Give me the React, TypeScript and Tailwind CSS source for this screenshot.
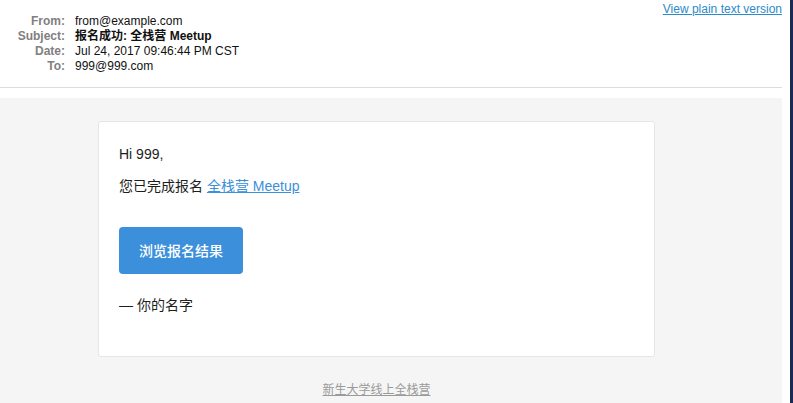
export default function App() {
  const font = { fontFamily: '"Liberation Sans", "Noto Sans CJK SC", sans-serif' };

  const headers = [
    { label: "From:", value: "from@example.com", bold: false },
    { label: "Subject:", value: "报名成功: 全栈营 Meetup", bold: true },
    { label: "Date:", value: "Jul 24, 2017 09:46:44 PM CST", bold: false },
    { label: "To:", value: "999@999.com", bold: false },
  ];

  return (
    <div className="flex h-[403px] w-[793px] overflow-hidden bg-white" style={font}>
      <div className="flex w-[782px] shrink-0 flex-col">
        <header className="flex h-[88px] shrink-0 items-start justify-between border-b border-[#dcdcdc]">
          <div className="grid grid-cols-[65px_1fr] gap-x-[10px] pt-[14px] text-[12px] leading-[15px]">
            {headers.map((h) => (
              <div key={h.label} className="contents">
                <span className="text-right font-bold text-[#808080]">{h.label}</span>
                <span className={h.bold ? "font-bold text-[#111]" : "text-[#111]"}>{h.value}</span>
              </div>
            ))}
          </div>
          <a href="#" className="pt-[2px] text-[12px] leading-[15px] text-[#2b8bc9] underline">
            View plain text version
          </a>
        </header>

        <main className="mt-[10px] flex-1 bg-[#f5f5f5] pt-[23px]">
          <div className="ml-[98px] w-[557px]">
            <div className="rounded-[3px] border border-[#e6e6e6] bg-white px-[20px] pt-[22px] pb-[41px] text-[14px] leading-[20px] text-[#1d1d1d]">
              <p>Hi 999,</p>
              <p className="mt-[12px]">
                您已完成报名{" "}
                <a href="#" className="text-[#3b8fdb] underline">
                  全栈营 Meetup
                </a>
              </p>
              <button
                type="button"
                className="mt-[31px] h-[47px] w-[124px] rounded-[4px] bg-[#3b8fdb] text-[14px] font-medium text-white"
              >
                浏览报名结果
              </button>
              <p className="mt-[21px]">— 你的名字</p>
            </div>
            <div className="mt-[25px] text-center text-[12px] leading-[16px]">
              <a href="#" className="text-[#9a9a9a] underline">
                新生大学线上全栈营
              </a>
            </div>
          </div>
        </main>
      </div>
      <div className="w-[8px] shrink-0 bg-white" />
      <div className="flex-1 bg-[#1b2a52]" />
    </div>
  );
}
